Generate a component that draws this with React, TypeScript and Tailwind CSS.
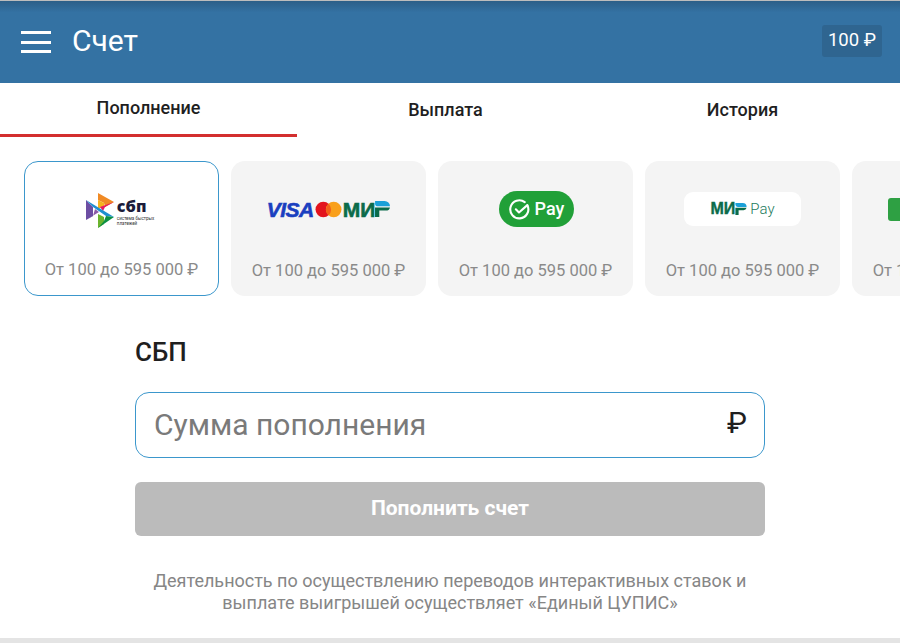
const font = { fontFamily: "Roboto, sans-serif" };

function SbpLogo() {
  return (
    <div className="flex items-center gap-[2px] -ml-[4px]">
      <svg width="30" height="37" viewBox="0 0 30 37" className="shrink-0">
        <polygon points="13,1 29,10 20,15 19,11 13,8" fill="#f08a24" />
        <polygon points="13,1 13,17 19,14 19,11 13,8" fill="#f5b21d" />
        <polygon points="29,10 20,15 18,19 15,15" fill="#e6195f" />
        <polygon points="1,8 1,28 8,24 8,15" fill="#6c4ea3" />
        <polygon points="1,28 14,20 10,17 8,24" fill="#8a5aa8" />
        <polygon points="1,8 29,25 21,24 8,15" fill="#1d8fd0" />
        <polygon points="13,22 13,36 19,32 19,25" fill="#6cb42d" />
        <polygon points="13,36 29,25 21,24 19,29" fill="#0c9043" />
      </svg>
      <div className="flex flex-col mt-[6px]">
        <span className="text-[16px] leading-[12px] font-extrabold text-[#1b1b3a]" style={{ fontFamily: "'Open Sans', sans-serif" }}>сбп</span>
        <span className="text-[4.5px] leading-[5px] text-[#333] mt-[4px]">система быстрых<br />платежей</span>
      </div>
    </div>
  );
}

function VisaMir() {
  return (
    <div className="flex items-center">
      <span className="text-[21px] leading-none font-black italic text-[#1a3fc0] tracking-[-0.5px]" style={{ fontFamily: "'Liberation Sans', sans-serif", WebkitTextStroke: "0.6px #1a3fc0" }}>VISA</span>
      <svg width="27" height="17" viewBox="0 0 26 16" className="mx-[1px]">
        <circle cx="8" cy="8" r="7.5" fill="#e3141e" />
        <circle cx="18" cy="8" r="7.5" fill="#f9a01b" />
        <path d="M13 2.4a7.5 7.5 0 0 1 0 11.2a7.5 7.5 0 0 1 0-11.2z" fill="#f2601a" />
      </svg>
      <span className="text-[21px] leading-none font-black text-[#0b6b4a]" style={{ fontFamily: "'Liberation Sans', sans-serif", WebkitTextStroke: "0.6px #0b6b4a" }}>МИ</span>
      <svg width="15" height="16" viewBox="0 0 14 15">
        <path d="M0 0h9a5 5 0 0 1 5 5H3a3 3 0 0 1-3-3z" fill="#1ba0d8" />
        <path d="M0 6h14a4 4 0 0 1-4 3H4v6H0z" fill="#0b6b4a" />
      </svg>
    </div>
  );
}

function SberPay() {
  return (
    <div className="ml-[2px] flex items-center justify-center gap-[5px] w-[75px] h-[36px] rounded-full bg-[#21a038] text-white">
      <svg width="21" height="21" viewBox="0 0 20 20" fill="none" stroke="#fff" strokeWidth="2" strokeLinecap="round" strokeLinejoin="round">
        <path d="M17.6 6.2A8.6 8.6 0 1 1 15 3" />
        <path d="M6.5 9.8l3 3 8-7" />
      </svg>
      <span className="text-[18px] font-medium leading-none">Pay</span>
    </div>
  );
}

function MirPay() {
  return (
    <div className="flex items-center justify-center gap-[3px] w-[117px] h-[34px] rounded-[9px] bg-white">
      <div className="flex items-center">
        <span className="text-[16px] leading-none font-black text-[#0b6b4a]" style={{ fontFamily: "'Liberation Sans', sans-serif", WebkitTextStroke: "0.4px #0b6b4a" }}>МИ</span>
        <svg width="12" height="12" viewBox="0 0 14 15">
          <path d="M0 0h9a5 5 0 0 1 5 5H3a3 3 0 0 1-3-3z" fill="#1ba0d8" />
          <path d="M0 6h14a4 4 0 0 1-4 3H4v6H0z" fill="#0b6b4a" />
        </svg>
      </div>
      <span className="text-[15px] leading-none font-light text-[#1d7a5c]">Pay</span>
    </div>
  );
}

function Card({ active, children }: { active?: boolean; children?: React.ReactNode }) {
  return (
    <div className={`shrink-0 w-[195px] h-[135px] rounded-[14px] flex flex-col items-center ${active ? "bg-white border border-[#3b97cc]" : "bg-[#f4f4f4]"}`}>
      <div className="h-[96px] w-full flex items-center justify-center">{children}</div>
      <div className={`${active ? "mt-[2px]" : "mt-[4px]"} text-[16.5px] leading-[20px] text-[#8a8a8a] whitespace-nowrap`}>От 100 до 595 000 ₽</div>
    </div>
  );
}

export default function App() {
  return (
    <div className="w-[900px] h-[643px] overflow-hidden bg-white flex flex-col" style={font}>
      <header className="h-[83px] shrink-0 flex items-center justify-between pl-[21px] pr-[18px] bg-[#3472a3] border-t border-[#bdbdbd] bg-gradient-to-b from-[#2c5f88] via-[#3472a3] via-[14%] to-[#3472a3]">
        <div className="flex items-center gap-[21px]">
          <div className="w-[30px] flex flex-col gap-[6.5px]">
            <span className="h-[3px] bg-white" />
            <span className="h-[3px] bg-white" />
            <span className="h-[3px] bg-white" />
          </div>
          <span className="text-[30px] leading-none text-white -mt-[3px]">Счет</span>
        </div>
        <div className="h-[32px] -mt-[2px] px-[6px] flex items-center rounded-[3px] bg-[#2f6590] text-[18.5px] text-white">100 ₽</div>
      </header>

      <nav className="h-[54px] shrink-0 grid grid-cols-[297px_297px_297px] text-[#1f1f1f] text-[18px] font-medium">
        <div className="flex justify-center pt-[11px] border-b-[3px] border-[#d32f2f]">Пополнение</div>
        <div className="flex justify-center pt-[13px]">Выплата</div>
        <div className="flex justify-center pt-[13px]">История</div>
      </nav>

      <div className="flex gap-[12px] pl-[24px] pt-[24px] overflow-hidden shrink-0">
        <Card active><SbpLogo /></Card>
        <Card><VisaMir /></Card>
        <Card><SberPay /></Card>
        <Card><MirPay /></Card>
        <Card><div className="w-[124px] h-[23px] rounded-[3px] bg-[#2ea043]" /></Card>
      </div>

      <main className="w-[630px] mx-auto flex flex-col flex-1">
        <h2 className="mt-[40px] text-[26px] leading-[32px] font-medium text-[#1f1f1f]">СБП</h2>
        <div className="mt-[24px] h-[66px] rounded-[14px] border border-[#3b97cc] flex items-center justify-between pl-[18px] pr-[17px]">
          <span className="text-[30px] text-[#7a7a7a] -mt-[2px]">Сумма пополнения</span>
          <span className="text-[30px] text-[#1f1f1f] -mt-[5px]">₽</span>
        </div>
        <button className="mt-[24px] h-[54px] rounded-[6px] bg-[#bbbbbb] text-white text-[21px] font-bold">Пополнить счет</button>
        <p className="mt-[34px] text-center text-[18px] leading-[22px] text-[#868686] px-[10px]">
          Деятельность по осуществлению переводов интерактивных ставок и<br />выплате выигрышей осуществляет «Единый ЦУПИС»
        </p>
      </main>
      <div className="h-[5px] shrink-0 bg-[#e4e4e4]" />
    </div>
  );
}
